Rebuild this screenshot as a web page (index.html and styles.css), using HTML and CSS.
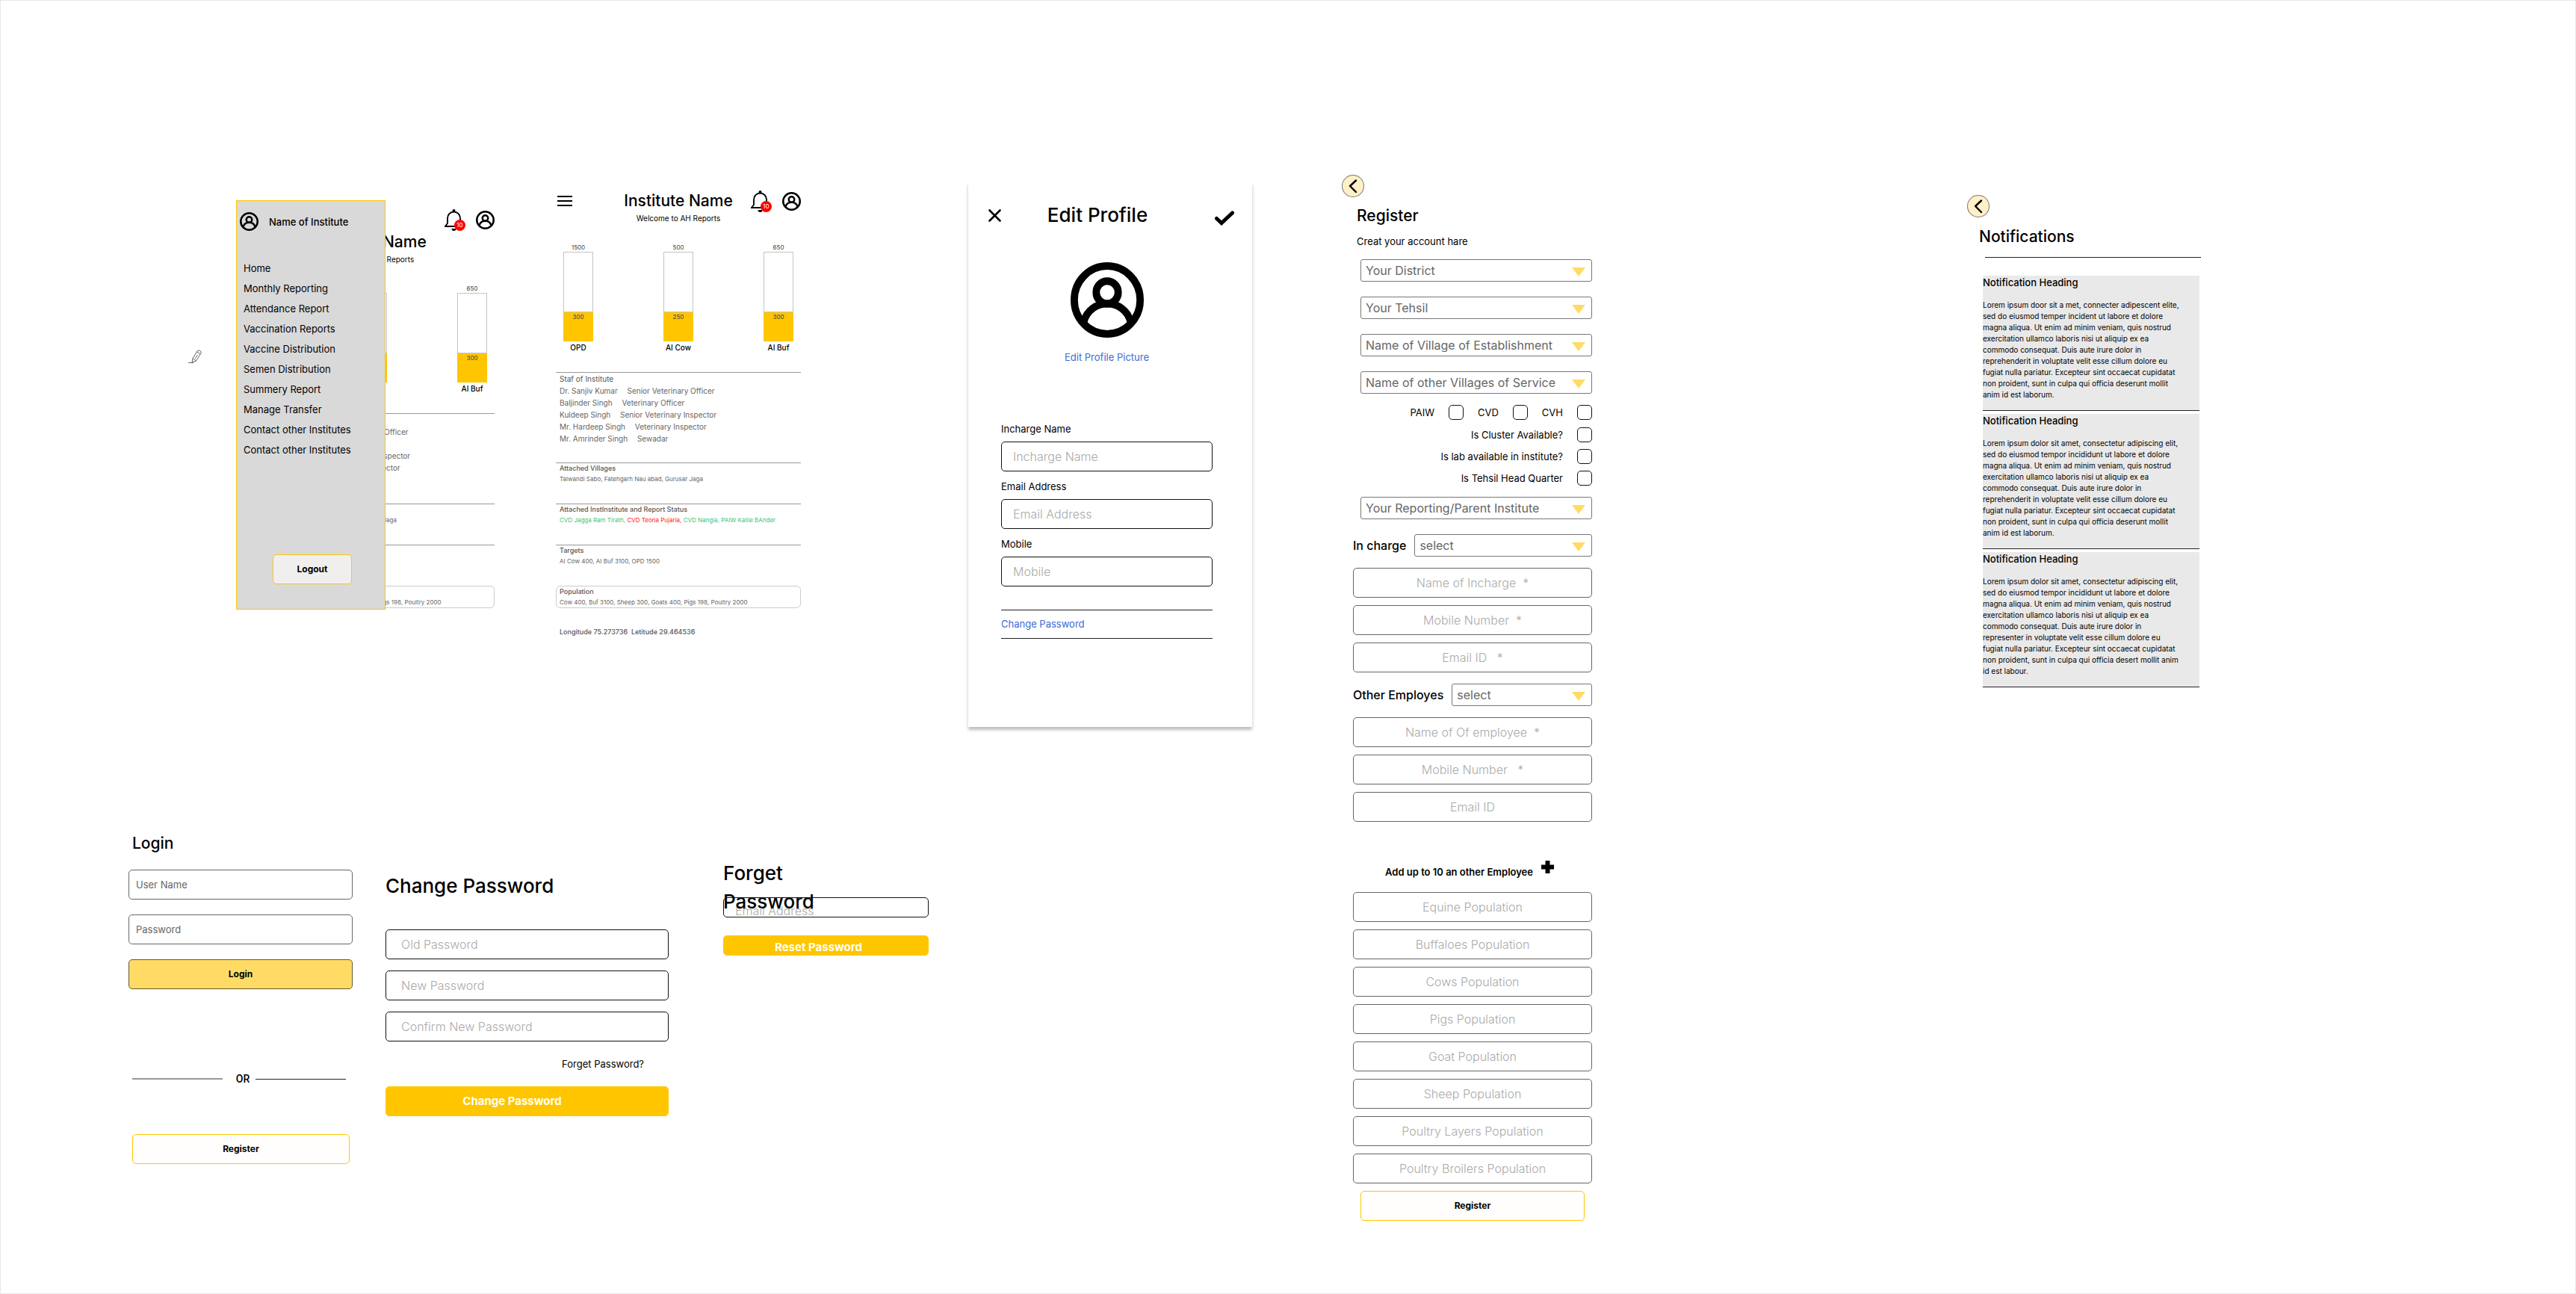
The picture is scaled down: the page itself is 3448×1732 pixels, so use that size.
FILE: index.html
```html
<!DOCTYPE html>
<html lang="en">
<head>
<meta charset="utf-8">
<meta name="viewport" content="width=device-width, initial-scale=1">
<title>AH Reports</title>
<link rel="stylesheet" href="styles.css">
</head>
<body>
<svg class="defs" aria-hidden="true">
  <symbol id="avatar" viewBox="0 0 100 100" preserveAspectRatio="none">
    <g fill="none" stroke="currentColor" stroke-width="10">
      <circle cx="50" cy="50" r="45"/>
      <circle cx="50" cy="40" r="15"/>
      <path d="M18 79C22 64 35 55 50 55s28 9 32 24"/>
    </g>
  </symbol>
  <symbol id="bell" viewBox="0 0 28 29">
    <circle cx="12.5" cy="2" r="2"/>
    <path d="M4 19v-7a8.500 8.500 0 0 1 17 0v7l3 4H1z" fill="none" stroke="currentColor" stroke-width="1.800"/>
    <path d="M0 22h25v2H0zM9.500 26h6a3 3 0 0 1-6 0z"/>
  </symbol>
  <symbol id="chevron" viewBox="0 0 30 30">
    <path d="M19 7.500l-8 7.500 8 8" fill="none" stroke="currentColor" stroke-width="2.400" stroke-linecap="round" stroke-linejoin="round"/>
  </symbol>
</svg>

<main class="canvas">
  <div class="boards">
    <div class="row row-top">
      <svg class="pencil" viewBox="0 0 18 19" width="18" height="19" fill="none" stroke="#666" stroke-width="1" aria-hidden="true">
        <path d="M5 17l1-5.500L12 2l2-1.200 3 1.700v2L10.500 15zM11.500 3l4.500 2.600M12.300 7l-3.300 5M6 12l4.500 2.800M0 17.500h7"/>
      </svg>

      <section class="menu-screen">
        <div class="dash">
          <header class="dash-tools">
            <div class="tools">
              <span class="bell"><svg width="28" height="29" aria-hidden="true"><use href="#bell"/></svg><span class="badge">10</span></span>
              <svg class="avatar" width="25" height="25" aria-hidden="true"><use href="#avatar"/></svg>
            </div>
          </header>
          <h1 class="dash-title">Institute Name</h1>
          <p class="welcome">Welcome to AH Reports</p>
          <div class="bars">
            <div class="bar"><span class="total">1500</span><div class="tube"></div><div class="fill">300</div><span class="name">OPD</span></div>
            <div class="bar"><span class="total">500</span><div class="tube"></div><div class="fill">250</div><span class="name">AI Cow</span></div>
            <div class="bar"><span class="total">650</span><div class="tube"></div><div class="fill">300</div><span class="name">AI Buf</span></div>
          </div>
          <section class="info staff">
            <h2>Staf of Institute</h2>
            <p>Dr. Sanjiv Kumar <span>Senior Veterinary Officer</span></p>
            <p>Baljinder Singh <span>Veterinary Officer</span></p>
            <p>Kuldeep Singh <span>Senior Veterinary Inspector</span></p>
            <p>Mr. Hardeep Singh <span>Veterinary Inspector</span></p>
            <p>Mr. Amrinder Singh <span>Sewadar</span></p>
          </section>
          <section class="info"><h2>Attached Villages</h2><p>Talwandi Sabo, Fatehgarh Nau abad, Gurusar Jaga</p></section>
          <section class="info"><h2>Targets</h2><p>AI Cow 400, AI Buf 3100, OPD 1500</p></section>
          <section class="info boxed"><h2>Population</h2><p>Cow 400, Buf 3100, Sheep 300, Goats 400, Pigs 198, Poultry 2000</p></section>
        </div>
        <nav class="menu">
          <div class="menu-head">
            <svg width="25" height="25" aria-hidden="true"><use href="#avatar"/></svg>
            <span>Name of Institute</span>
          </div>
          <ul>
            <li><a href="#">Home</a></li>
            <li><a href="#">Monthly Reporting</a></li>
            <li><a href="#">Attendance Report</a></li>
            <li><a href="#">Vaccination Reports</a></li>
            <li><a href="#">Vaccine Distribution</a></li>
            <li><a href="#">Semen Distribution</a></li>
            <li><a href="#">Summery Report</a></li>
            <li><a href="#">Manage Transfer</a></li>
            <li><a href="#">Contact other Institutes</a></li>
            <li><a href="#">Contact other Institutes</a></li>
          </ul>
          <button class="btn btn-logout" type="button">Logout</button>
        </nav>
      </section>

      <section class="dash dash-main">
        <header class="dash-head">
          <button class="burger" type="button" aria-label="Menu"><i></i><i></i><i></i></button>
          <h1 class="dash-title">Institute Name</h1>
          <div class="tools">
            <span class="bell"><svg width="28" height="29" aria-hidden="true"><use href="#bell"/></svg><span class="badge">10</span></span>
            <svg class="avatar" width="25" height="25" aria-hidden="true"><use href="#avatar"/></svg>
          </div>
        </header>
        <p class="welcome">Welcome to AH Reports</p>
        <div class="bars">
          <div class="bar"><span class="total">1500</span><div class="tube"></div><div class="fill">300</div><span class="name">OPD</span></div>
          <div class="bar"><span class="total">500</span><div class="tube"></div><div class="fill">250</div><span class="name">AI Cow</span></div>
          <div class="bar"><span class="total">650</span><div class="tube"></div><div class="fill">300</div><span class="name">AI Buf</span></div>
        </div>
        <section class="info staff">
          <h2>Staf of Institute</h2>
          <p>Dr. Sanjiv Kumar <span>Senior Veterinary Officer</span></p>
          <p>Baljinder Singh <span>Veterinary Officer</span></p>
          <p>Kuldeep Singh <span>Senior Veterinary Inspector</span></p>
          <p>Mr. Hardeep Singh <span>Veterinary Inspector</span></p>
          <p>Mr. Amrinder Singh <span>Sewadar</span></p>
        </section>
        <section class="info"><h2>Attached Villages</h2><p>Talwandi Sabo, Fatehgarh Nau abad, Gurusar Jaga</p></section>
        <section class="info"><h2>Attached InstInstitute and Report Status</h2><p class="ok">CVD Jagga Ram Tirath, <b>CVD Teona Pujaria,</b> CVD Nangla, PAIW Kalile BAnder</p></section>
        <section class="info"><h2>Targets</h2><p>AI Cow 400, AI Buf 3100, OPD 1500</p></section>
        <section class="info boxed"><h2>Population</h2><p>Cow 400, Buf 3100, Sheep 300, Goats 400, Pigs 198, Poultry 2000</p></section>
        <p class="coords">Longitude 75.273736&nbsp; Letitude 29.464536</p>
      </section>

      <form class="profile">
        <header class="profile-head">
          <button class="icon-btn" type="button" aria-label="Close"><svg width="17" height="17" viewBox="0 0 17 17"><path d="M1.500 1.500l14 14M15.500 1.500l-14 14" stroke="#000" stroke-width="2.600" stroke-linecap="round"/></svg></button>
          <h1>Edit Profile</h1>
          <button class="icon-btn save" type="button" aria-label="Save"><svg width="26" height="20" viewBox="0 0 26 20"><path d="M2.500 10.500L9 16.500 23.500 3" fill="none" stroke="#000" stroke-width="5" stroke-linecap="round"/></svg></button>
        </header>
        <svg class="portrait" width="98" height="101" aria-hidden="true"><use href="#avatar"/></svg>
        <a class="link" href="#">Edit Profile Picture</a>
        <div class="profile-fields">
          <label for="p-name">Incharge Name</label>
          <input class="field dark" id="p-name" type="text" placeholder="Incharge Name">
          <label for="p-mail">Email Address</label>
          <input class="field dark" id="p-mail" type="email" placeholder="Email Address">
          <label for="p-mob">Mobile</label>
          <input class="field dark" id="p-mob" type="tel" placeholder="Mobile">
          <a class="link ruled" href="#">Change Password</a>
        </div>
      </form>
    </div>

    <div class="row row-bottom">
      <form class="login">
        <h1>Login</h1>
        <input class="field small" type="text" aria-label="User Name" placeholder="User Name">
        <input class="field small" type="password" aria-label="Password" placeholder="Password">
        <button class="btn btn-login" type="button">Login</button>
        <div class="or"><span>OR</span></div>
        <button class="btn btn-outline" type="button">Register</button>
      </form>

      <form class="change">
        <h1>Change Password</h1>
        <input class="field dark" type="password" aria-label="Old Password" placeholder="Old Password">
        <input class="field dark" type="password" aria-label="New Password" placeholder="New Password">
        <input class="field dark" type="password" aria-label="Confirm New Password" placeholder="Confirm New Password">
        <a href="#">Forget Password?</a>
        <button class="btn btn-solid" type="button">Change Password</button>
      </form>

      <form class="forget">
        <h1>Forget<br>Password</h1>
        <input class="field dark" type="email" aria-label="Email Address" placeholder="Email Address">
        <button class="btn btn-solid" type="button">Reset Password</button>
      </form>
    </div>
  </div>

  <form class="register">
    <button class="back" type="button" aria-label="Back"><svg width="30" height="30"><use href="#chevron"/></svg></button>
    <h1>Register</h1>
    <p class="lead">Creat your account hare</p>
    <div class="selects">
      <div class="select"><select aria-label="Your District"><option>Your District</option></select></div>
      <div class="select"><select aria-label="Your Tehsil"><option>Your Tehsil</option></select></div>
      <div class="select"><select aria-label="Name of Village of Establishment"><option>Name of Village of Establishment</option></select></div>
      <div class="select"><select aria-label="Name of other Villages of Service"><option>Name of other Villages of Service</option></select></div>
    </div>
    <div class="checks">
      <div class="check-row">
        <label>PAIW <input type="checkbox"></label>
        <label>CVD <input type="checkbox"></label>
        <label>CVH <input type="checkbox"></label>
      </div>
      <label>Is Cluster Available? <input type="checkbox"></label>
      <label>Is lab available in institute? <input type="checkbox"></label>
      <label>Is Tehsil Head Quarter <input type="checkbox"></label>
    </div>
    <div class="selects">
      <div class="select"><select aria-label="Your Reporting/Parent Institute"><option>Your Reporting/Parent Institute</option></select></div>
    </div>
    <div class="pick first">
      <label for="r-in">In charge</label>
      <div class="select"><select id="r-in"><option>select</option></select></div>
    </div>
    <div class="stack">
      <input class="field mid" type="text" aria-label="Name of Incharge" placeholder="Name of Incharge&nbsp; *">
      <input class="field mid" type="tel" aria-label="Mobile Number" placeholder="Mobile Number&nbsp; *">
      <input class="field mid" type="email" aria-label="Email ID" placeholder="Email ID&nbsp;&nbsp; *">
    </div>
    <div class="pick">
      <label for="r-emp">Other Employes</label>
      <div class="select"><select id="r-emp"><option>select</option></select></div>
    </div>
    <div class="stack">
      <input class="field mid" type="text" aria-label="Name of employee" placeholder="Name of Of employee&nbsp; *">
      <input class="field mid" type="tel" aria-label="Employee mobile number" placeholder="Mobile Number&nbsp;&nbsp; *">
      <input class="field mid" type="email" aria-label="Employee email ID" placeholder="Email ID">
    </div>
    <div class="add">
      <span id="add-label">Add up to 10 an other Employee</span>
      <button class="icon-btn" type="button" aria-labelledby="add-label"><svg width="17" height="17" viewBox="0 0 17 17"><path d="M5.500 0h6v5.500H17v6h-5.500V17h-6v-5.500H0v-6h5.500z"/></svg></button>
    </div>
    <div class="stack">
      <input class="field mid" type="text" aria-label="Equine Population" placeholder="Equine Population">
      <input class="field mid" type="text" aria-label="Buffaloes Population" placeholder="Buffaloes Population">
      <input class="field mid" type="text" aria-label="Cows Population" placeholder="Cows Population">
      <input class="field mid" type="text" aria-label="Pigs Population" placeholder="Pigs Population">
      <input class="field mid" type="text" aria-label="Goat Population" placeholder="Goat Population">
      <input class="field mid" type="text" aria-label="Sheep Population" placeholder="Sheep Population">
      <input class="field mid" type="text" aria-label="Poultry Layers Population" placeholder="Poultry Layers Population">
      <input class="field mid" type="text" aria-label="Poultry Broilers Population" placeholder="Poultry Broilers Population">
      <button class="btn btn-outline" type="button">Register</button>
    </div>
  </form>

  <section class="notes">
    <button class="back" type="button" aria-label="Back"><svg width="30" height="30"><use href="#chevron"/></svg></button>
    <h1>Notifications</h1>
    <hr>
    <div class="note-list">
      <article>
        <h2>Notification Heading</h2>
        <p>Lorem ipsum door sit a met, connecter adipescent elite,<br>sed do eiusmod temper incident ut labore et dolore<br>magna aliqua. Ut enim ad minim veniam, quis nostrud<br>exercitation ullamco laboris nisi ut aliquip ex ea<br>commodo consequat. Duis aute irure dolor in<br>reprehenderit in voluptate velit esse cillum dolore eu<br>fugiat nulla pariatur. Excepteur sint occaecat cupidatat<br>non proident, sunt in culpa qui officia deserunt mollit<br>anim id est laborum.</p>
      </article>
      <article>
        <h2>Notification Heading</h2>
        <p>Lorem ipsum dolor sit amet, consectetur adipiscing elit,<br>sed do eiusmod tempor incididunt ut labore et dolore<br>magna aliqua. Ut enim ad minim veniam, quis nostrud<br>exercitation ullamco laboris nisi ut aliquip ex ea<br>commodo consequat. Duis aute irure dolor in<br>reprehenderit in voluptate velit esse cillum dolore eu<br>fugiat nulla pariatur. Excepteur sint occaecat cupidatat<br>non proident, sunt in culpa qui officia deserunt mollit<br>anim id est laborum.</p>
      </article>
      <article>
        <h2>Notification Heading</h2>
        <p>Lorem ipsum dolor sit amet, consectetur adipiscing elit,<br>sed do eiusmod tempor incididunt ut labore et dolore<br>magna aliqua. Ut enim ad minim veniam, quis nostrud<br>exercitation ullamco laboris nisi ut aliquip ex ea<br>commodo consequat. Duis aute irure dolor in<br>representer in voluptate velit esse cillum dolore eu<br>fugiat nulla pariatur. Excepteur sint occaecat cupidatat<br>non proident, sunt in culpa qui officia desert mollit anim<br>id est labour.</p>
      </article>
    </div>
  </section>
</main>
</body>
</html>
```
FILE: styles.css
```css
* {
  box-sizing: border-box;
  margin: 0;
  padding: 0;
}

body {
  background: #fff;
  color: #000;
  font: 400 13px/18px Inter, "Open Sans", sans-serif;
}

input,
select,
button {
  font: inherit;
  color: inherit;
}

button {
  cursor: pointer;
}

a {
  color: inherit;
  text-decoration: none;
}

svg {
  display: block;
}

.defs {
  position: absolute;
  width: 0;
  height: 0;
}

h1 {
  font-size: 21px;
  line-height: 30px;
  font-weight: 500;
}

/* Canvas with the three groups of screens */
.canvas {
  display: grid;
  grid-template-columns:
    minmax(0, 171fr) minmax(0, 1504fr) minmax(0, 120fr) minmax(0, 335fr)
    minmax(0, 502fr) minmax(0, 313fr) minmax(0, 501fr);
  align-items: start;
  min-height: 100vh;
  border: 1px solid #e8e8e8;
}

.boards {
  grid-column: 2;
  padding-top: 242px;
}

.register {
  grid-column: 4;
  padding: 233px 0 90px 15px;
}

.notes {
  grid-column: 6;
  padding-top: 260px;
}

.row {
  display: grid;
  align-items: start;
}

.row-top {
  grid-template-columns:
    minmax(0, 80fr) 18px minmax(0, 46fr) minmax(0, 346fr) minmax(0, 82fr)
    minmax(0, 328fr) minmax(0, 224fr) minmax(0, 380fr);
}

.row-bottom {
  grid-template-columns:
    minmax(0, 300fr) minmax(0, 44fr) minmax(0, 379fr) minmax(0, 73fr)
    minmax(0, 275fr) minmax(0, 433fr);
  margin-top: 141px;
}

.pencil {
  grid-column: 2;
  margin-top: 225px;
}

.menu-screen {
  grid-column: 4;
  position: relative;
  padding: 37px 0 0 18px;
}

.dash-main {
  grid-column: 6;
  padding-top: 11px;
}

.profile {
  grid-column: 8;
}

/* Form pieces */
.field {
  display: block;
  width: 100%;
  height: 40px;
  padding: 0 15px;
  border: 1px solid #666;
  border-radius: 5px;
  background: #fff;
  font-size: 16px;
}

.field::placeholder {
  color: #aaa;
  font-weight: 300;
  opacity: 1;
}

.field.dark {
  border-color: #111;
}

.field.small {
  padding: 0 9px;
  font-size: 13px;
}

.field.small::placeholder {
  color: #666;
  font-weight: 400;
}

.field.mid {
  text-align: center;
}

.btn {
  display: block;
  height: 40px;
  border: 1px solid #ffc600;
  border-radius: 5px;
  font-size: 12px;
  font-weight: 700;
}

.btn-outline {
  background: #fffefc;
}

.btn-solid {
  background: #ffc600;
  color: #fff;
  font-size: 15px;
}

.btn-login {
  background: #ffdb66;
  border-color: #665828;
}

.btn-logout {
  width: 106px;
  background: #f0efed;
}

.icon-btn {
  border: 0;
  background: none;
}

.back {
  display: block;
  width: 30px;
  height: 30px;
  border: 0;
  border-radius: 50%;
  background: #fff0c8;
  box-shadow: inset 0 0 0 1px #777;
}

.link {
  color: #3a6bd6;
}

/* Dashboard */
.dash-head {
  display: grid;
  grid-template-columns: 1fr auto 1fr;
  align-items: center;
  height: 30px;
}

.burger {
  display: flex;
  flex-direction: column;
  gap: 4px;
  width: 20px;
  margin-left: 2px;
  border: 0;
  background: none;
}

.burger i {
  width: 20px;
  height: 2px;
  background: #000;
}

.tools {
  display: flex;
  justify-content: flex-end;
  gap: 14px;
}

.tools .avatar {
  margin-top: 2px;
}

.bell {
  position: relative;
}

.badge {
  position: absolute;
  top: 14px;
  left: 13px;
  width: 15px;
  height: 15px;
  border-radius: 50%;
  background: #f00;
  color: #fff;
  font-size: 8px;
  line-height: 15px;
  text-align: center;
}

.dash-title {
  text-align: center;
}

.welcome {
  font-size: 10px;
  line-height: 16px;
  text-align: center;
}

.bars {
  display: flex;
  justify-content: space-between;
  padding: 25px 10px;
}

.bar {
  display: flex;
  flex-direction: column;
  align-items: center;
  width: 40px;
  white-space: nowrap;
}

.total,
.fill {
  color: #444;
  font-size: 8px;
  line-height: 12px;
}

.tube {
  width: 40px;
  height: 81px;
  border: 1px solid #c4c4c4;
}

.fill {
  width: 40px;
  height: 39px;
  background: #ffc600;
  text-align: center;
}

.name {
  font-size: 10px;
  line-height: 16px;
  font-weight: 500;
}

.info {
  height: 55px;
  padding-left: 5px;
  border-top: 1px solid #999;
  color: #666;
  font-size: 8px;
  line-height: 14px;
  white-space: nowrap;
}

.info h2 {
  font-size: 9px;
  font-weight: 500;
  color: #555;
}

.staff {
  height: 121px;
}

.staff,
.staff h2 {
  font-size: 10px;
  line-height: 16px;
}

.staff h2 {
  font-weight: 400;
}

.staff span {
  margin-left: 10px;
}

.boxed {
  height: 30px;
  padding-left: 4px;
  border: 1px solid #ccc;
  border-radius: 6px;
}

.info .ok {
  color: #3cc47c;
}

.ok b {
  color: #f22;
  font-weight: 400;
}

.coords {
  margin: 25px 0 0 5px;
  color: #555;
  font-size: 9px;
  line-height: 14px;
  font-weight: 500;
}

/* Slide-out menu, over the dashboard */
.menu {
  position: absolute;
  top: 25px;
  left: 0;
  display: flex;
  flex-direction: column;
  width: 200px;
  height: 548px;
  padding: 15px 4px 33px;
  border: 1px solid #ffc600;
  background: #d9d9d9;
}

.menu-head {
  display: flex;
  align-items: center;
  gap: 14px;
  font-weight: 500;
}

.menu ul {
  flex: 1;
  margin-top: 37px;
  padding-left: 5px;
  list-style: none;
  line-height: 27px;
}

.menu .btn {
  margin-left: 44px;
}

/* Edit profile */
.profile {
  display: flex;
  flex-direction: column;
  align-items: center;
  min-height: 730px;
  padding: 27px 53px 0 44px;
  background: #fff;
  box-shadow: 0 4px 4px rgba(0, 0, 0, 0.25);
}

.profile-head {
  display: flex;
  justify-content: space-between;
  align-self: stretch;
  margin: 0 -29px 0 -17px;
}

.profile-head h1,
.change h1 {
  font-size: 26px;
  line-height: 36px;
}

.profile-head h1 {
  margin-right: 28px;
}

.profile-head .icon-btn {
  align-self: center;
}

.profile-head .save {
  margin-top: 8px;
}

.portrait {
  margin-top: 45px;
}

.profile .link {
  margin-top: 17px;
}

.profile-fields {
  align-self: stretch;
  padding-top: 78px;
}

.profile-fields label {
  display: block;
  margin-bottom: 8px;
}

.profile-fields .field {
  margin-bottom: 11px;
}

.profile-fields .ruled {
  display: block;
  margin-top: 31px;
  padding: 9px 0 10px;
  border: solid #222;
  border-width: 1px 0;
}

/* Login */
.login {
  display: flex;
  flex-direction: column;
  gap: 20px;
}

.login h1 {
  margin-left: 5px;
}

.or {
  display: flex;
  align-items: center;
  gap: 8px;
  margin: 89px 9px 43px 5px;
  font: 500 14px/22px Roboto, sans-serif;
}

.or::before,
.or::after {
  content: "";
  flex: 1;
  height: 1px;
  background: #222;
}

.or::before {
  height: 2px;
  margin-right: 10px;
  background: #999;
}

.login .btn-outline {
  margin: 0 4px 0 5px;
}

/* Change password */
.change {
  grid-column: 3;
  display: flex;
  flex-direction: column;
  gap: 15px;
  padding-top: 54px;
}

.change h1 {
  margin-bottom: 25px;
}

.change .field {
  padding: 0 20px;
}

.change a {
  align-self: flex-end;
  margin: 6px 33px;
}

.change .btn {
  padding-right: 40px;
}

/* Forget password */
.forget {
  grid-column: 5;
  padding-top: 36px;
}

.forget h1 {
  position: relative;
  z-index: 1;
  font-size: 26px;
  line-height: 38px;
}

.forget .field {
  height: 27px;
  margin-top: -25px;
  padding-top: 8px;
}

.forget .btn {
  width: 100%;
  height: 27px;
  margin-top: 24px;
  padding: 4px 20px 0 0;
}

/* Register */
.register .back {
  margin-left: -15px;
}

.register h1,
.lead {
  margin: 10px 0 0 5px;
}

.selects {
  display: grid;
  gap: 20px;
  margin: 15px 0 0 10px;
}

.select {
  position: relative;
}

.select select {
  display: block;
  width: 100%;
  height: 30px;
  padding: 0 36px 0 6px;
  border: 1px solid #777;
  border-radius: 3px;
  background: #fff;
  color: #666;
  font-size: 16px;
  font-weight: 400;
  appearance: none;
}

.select::after {
  content: "";
  position: absolute;
  top: 11px;
  right: 9px;
  border: solid transparent;
  border-width: 12px 9px 0;
  border-top-color: #ffdb66;
  pointer-events: none;
}

.checks {
  display: flex;
  flex-direction: column;
  align-items: flex-end;
  gap: 9px;
  margin-top: 15px;
}

.checks label {
  display: flex;
  align-items: center;
  gap: 19px;
}

.check-row {
  display: flex;
  gap: 19px;
  margin-bottom: 1px;
}

.checks input {
  width: 20px;
  height: 20px;
  border: 1px solid #111;
  border-radius: 5px;
  background: #fff;
  appearance: none;
}

.pick {
  display: flex;
  align-items: center;
  gap: 11px;
  margin-top: 15px;
  font-size: 16px;
  font-weight: 500;
}

.pick.first {
  margin-top: 20px;
}

.pick .select {
  flex: 1;
}

.stack {
  display: grid;
  gap: 10px;
  margin-top: 15px;
}

.stack .btn {
  margin: 0 10px;
}

.add {
  display: flex;
  align-items: flex-start;
  justify-content: flex-end;
  gap: 11px;
  margin: 52px 51px 18px 0;
  font-weight: 600;
}

.add span {
  padding-top: 6px;
}

/* Notifications */
.notes h1 {
  margin: 11px 0 0 16px;
}

.notes hr {
  margin: 12px 0 24px 24px;
  border: 0;
  border-top: 1px solid #222;
}

.note-list {
  display: grid;
  gap: 4px;
  margin: 0 2px 0 21px;
}

.note-list article {
  padding-bottom: 13px;
  border-bottom: 1px solid #222;
  background: #e9e9e9;
  font-size: 10px;
  line-height: 15px;
  white-space: nowrap;
}

.note-list h2 {
  margin-bottom: 14px;
  font-size: 13px;
  line-height: 18px;
  font-weight: 500;
}
```
